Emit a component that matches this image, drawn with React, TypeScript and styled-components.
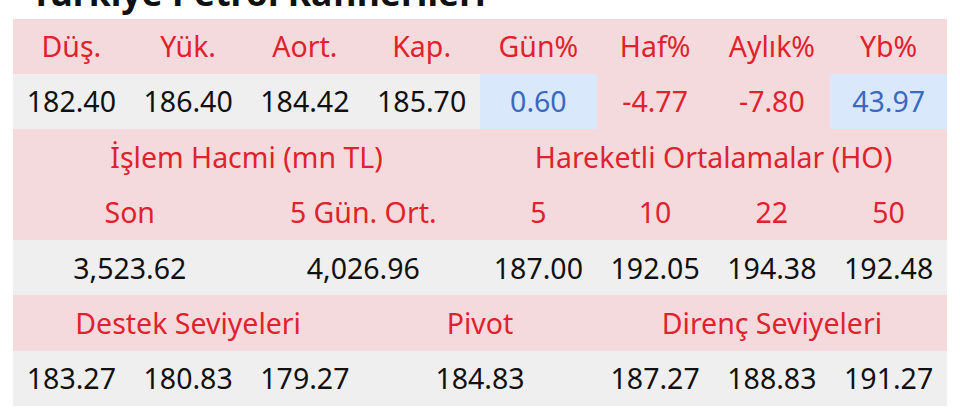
import styled, { createGlobalStyle } from "styled-components";

const GlobalStyle = createGlobalStyle`
  body {
    margin: 0;
    background: #ffffff;
    font-family: "Noto Sans", "Open Sans", sans-serif;
  }
`;

type Tone = "head" | "plain" | "up" | "down";

const rows: { tone: Tone; text: string; span?: number }[][] = [
  [
    { tone: "head", text: "Düş." },
    { tone: "head", text: "Yük." },
    { tone: "head", text: "Aort." },
    { tone: "head", text: "Kap." },
    { tone: "head", text: "Gün%" },
    { tone: "head", text: "Haf%" },
    { tone: "head", text: "Aylık%" },
    { tone: "head", text: "Yb%" },
  ],
  [
    { tone: "plain", text: "182.40" },
    { tone: "plain", text: "186.40" },
    { tone: "plain", text: "184.42" },
    { tone: "plain", text: "185.70" },
    { tone: "up", text: "0.60" },
    { tone: "down", text: "-4.77" },
    { tone: "down", text: "-7.80" },
    { tone: "up", text: "43.97" },
  ],
  [
    { tone: "head", text: "İşlem Hacmi (mn TL)", span: 4 },
    { tone: "head", text: "Hareketli Ortalamalar (HO)", span: 4 },
  ],
  [
    { tone: "head", text: "Son", span: 2 },
    { tone: "head", text: "5 Gün. Ort.", span: 2 },
    { tone: "head", text: "5" },
    { tone: "head", text: "10" },
    { tone: "head", text: "22" },
    { tone: "head", text: "50" },
  ],
  [
    { tone: "plain", text: "3,523.62", span: 2 },
    { tone: "plain", text: "4,026.96", span: 2 },
    { tone: "plain", text: "187.00" },
    { tone: "plain", text: "192.05" },
    { tone: "plain", text: "194.38" },
    { tone: "plain", text: "192.48" },
  ],
  [
    { tone: "head", text: "Destek Seviyeleri", span: 3 },
    { tone: "head", text: "Pivot", span: 2 },
    { tone: "head", text: "Direnç Seviyeleri", span: 3 },
  ],
  [
    { tone: "plain", text: "183.27" },
    { tone: "plain", text: "180.83" },
    { tone: "plain", text: "179.27" },
    { tone: "plain", text: "184.83", span: 2 },
    { tone: "plain", text: "187.27" },
    { tone: "plain", text: "188.83" },
    { tone: "plain", text: "191.27" },
  ],
];

function App() {
  return (
    <>
      <GlobalStyle />
      <Page>
        <Title>Türkiye Petrol Rafinerileri</Title>
        <Table>
          <colgroup>
            {Array.from({ length: 8 }).map((_, i) => (
              <Col key={i} />
            ))}
          </colgroup>
          <tbody>
            {rows.map((row, r) => (
              <Row key={r}>
                {row.map((c, i) => (
                  <Cell key={i} $tone={c.tone} colSpan={c.span}>
                    {c.text}
                  </Cell>
                ))}
              </Row>
            ))}
          </tbody>
        </Table>
      </Page>
    </>
  );
}

const Page = styled.div`
  padding: 0 13px;
  width: 934px;
`;

const Title = styled.h1`
  margin: -25px 0 8px 18px;
  font-family: "Noto Sans", "Liberation Sans", sans-serif;
  font-weight: 700;
  font-size: 35.5px;
  line-height: 1;
  color: #111111;
  white-space: nowrap;
`;

const Table = styled.table`
  width: 934px;
  table-layout: fixed;
  border-collapse: collapse;
  border-spacing: 0;
`;

const Col = styled.col`
  width: 116.75px;
`;

const Row = styled.tr`
  height: 55.4px;
`;

const bg: Record<Tone, string> = {
  head: "#f4dadd",
  plain: "#efefef",
  up: "#dae8fc",
  down: "#f4dadd",
};

const fg: Record<Tone, string> = {
  head: "#e0222c",
  plain: "#111111",
  up: "#3a69c0",
  down: "#e0222c",
};

const Cell = styled.td<{ $tone: Tone }>`
  padding: 0;
  text-align: center;
  vertical-align: middle;
  font-size: 28.5px;
  line-height: 1;
  white-space: nowrap;
  background: ${(p) => bg[p.$tone]};
  color: ${(p) => fg[p.$tone]};
`;

export default App;
